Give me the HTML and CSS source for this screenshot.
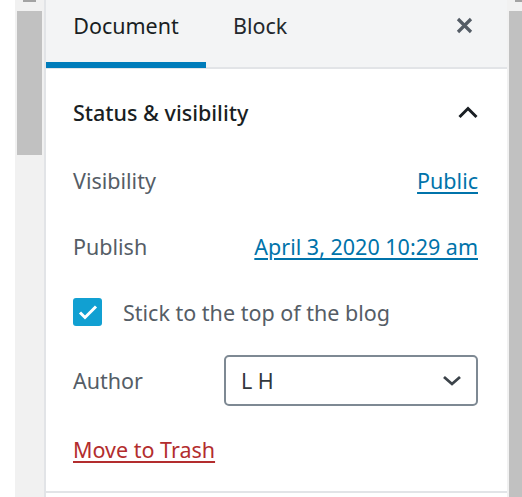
FILE: index.html
```html
<!DOCTYPE html>
<html>
<head>
<meta charset="utf-8">
<link rel="stylesheet" href="styles.css">
</head>
<body>
<div class="frame">
  <div class="gutter"></div>
  <div class="track left-track"><div class="arrow-mark"></div><div class="thumb"></div></div>
  <div class="sidebar">
    <div class="header">
      <button class="tab active">Document</button>
      <button class="tab">Block</button>
      <button class="close" aria-label="Close">
        <svg width="17" height="17" viewBox="0 0 17 17"><path d="M2 2L15 15M15 2L2 15" stroke="#555d66" stroke-width="3.2" fill="none"/></svg>
      </button>
    </div>
    <div class="panel">
      <div class="panel-title">
        <span>Status &amp; visibility</span>
        <svg width="20" height="14" viewBox="0 0 20 14"><path d="M1.5 12L10 3.5L18.5 12" stroke="#191e23" stroke-width="3" fill="none"/></svg>
      </div>
      <div class="panel-body">
        <div class="row">
          <span class="label">Visibility</span>
          <a class="link" href="#">Public</a>
        </div>
        <div class="row">
          <span class="label">Publish</span>
          <a class="link" href="#">April 3, 2020 10:29 am</a>
        </div>
        <div class="row check-row">
          <span class="checkbox">
            <svg width="22" height="18" viewBox="0 0 22 18"><path d="M3 9.5L8 14.5L19 3.5" stroke="#fff" stroke-width="3" fill="none"/></svg>
          </span>
          <span class="check-label">Stick to the top of the blog</span>
        </div>
        <div class="row author-row">
          <span class="label">Author</span>
          <div class="select">
            <span>L H</span>
            <svg width="20" height="11" viewBox="0 0 20 11"><path d="M2 2L10 9L18 2" stroke="#3c434a" stroke-width="2.8" fill="none"/></svg>
          </div>
        </div>
        <div class="row">
          <a class="trash" href="#">Move to Trash</a>
        </div>
      </div>
    </div>
  </div>
  <div class="track right-track"><div class="arrow-mark"></div><div class="thumb"></div></div>
</div>
</body>
</html>
```

FILE: styles.css
```css
html, body {
  margin: 0;
  padding: 0;
  background: #fff;
}
body {
  font-family: "Noto Sans", "Open Sans", sans-serif;
  font-size: 21.5px;
  color: #191e23;
}
.frame {
  display: flex;
  width: 522px;
  height: 497px;
  overflow: hidden;
}
.gutter {
  width: 15px;
  flex: none;
  background: #fff;
}
.track {
  flex: none;
  background: #f1f1f1;
  position: relative;
}
.left-track {
  border-right: 2px solid #e2e4e7;
  padding: 11px 2px 0 2px;
  box-sizing: border-box;
  width: 31px;
}
.left-track .thumb {
  width: 25px;
  height: 144px;
  background: #c1c1c1;
}
.left-track .arrow-mark {
  position: absolute;
  left: 8px;
  top: 0;
  width: 13px;
  height: 2px;
  background: #a3a3a3;
}
.right-track {
  width: 15px;
  padding: 11px 0 0 2px;
  box-sizing: border-box;
}
.right-track .thumb {
  width: 13px;
  height: 486px;
  background: #c1c1c1;
}
.right-track .arrow-mark {
  position: absolute;
  left: 8px;
  top: 0;
  width: 7px;
  height: 2px;
  background: #a3a3a3;
}
.sidebar {
  width: 461px;
  flex: none;
  display: flex;
  flex-direction: column;
  background: #fff;
}
.header {
  height: 69px;
  display: flex;
  align-items: flex-start;
  background: #f3f4f5;
  box-shadow: inset 0 -2px 0 #e2e4e7;
}
.tab {
  font: inherit;
  font-size: 21.5px;
  height: 68px;
  padding: 0 27px 16px;
  border: 0;
  background: transparent;
  color: #23282d;
  line-height: 52px;
  cursor: pointer;
}
.tab.active {
  width: 160px;
  padding: 0 0 16px;
  color: #191e23;
  box-shadow: inset 0 -6px 0 #007cba;
}
.close {
  margin-left: auto;
  margin-right: 34px;
  margin-top: 17px;
  width: 17px;
  height: 17px;
  padding: 0;
  border: 0;
  background: transparent;
  display: flex;
}
.panel {
  border-bottom: 2px solid #e2e4e7;
  padding-bottom: 19px;
}
.panel-title {
  height: 88px;
  display: flex;
  align-items: center;
  justify-content: space-between;
  padding: 0 29px 2px 27px;
  box-sizing: border-box;
  font-weight: 500;
  color: #191e23;
}
.panel-body {
  display: flex;
  flex-direction: column;
  gap: 20px;
  padding: 0 29px 0 27px;
}
.row {
  height: 46px;
  display: flex;
  align-items: center;
  justify-content: space-between;
}
.label {
  color: #555d66;
}
.link {
  color: #0073aa;
  text-decoration: underline;
  text-decoration-thickness: 2px;
  text-underline-offset: 3px;
}
.check-row {
  justify-content: flex-start;
  gap: 21px;
}
.checkbox {
  width: 29px;
  height: 28px;
  border-radius: 3px;
  background: #11a0d2;
  display: flex;
  align-items: center;
  justify-content: center;
}
.check-label {
  color: #555d66;
}
.author-row {
  height: 51px;
}
.select {
  width: 254px;
  height: 51px;
  box-sizing: border-box;
  border: 2px solid #7e8993;
  border-radius: 5px;
  display: flex;
  align-items: center;
  justify-content: space-between;
  padding: 0 14px 0 15px;
  color: #32373c;
}
.trash {
  color: #b32d2e;
  text-decoration: underline;
  text-decoration-thickness: 2px;
  text-underline-offset: 3px;
}
```
